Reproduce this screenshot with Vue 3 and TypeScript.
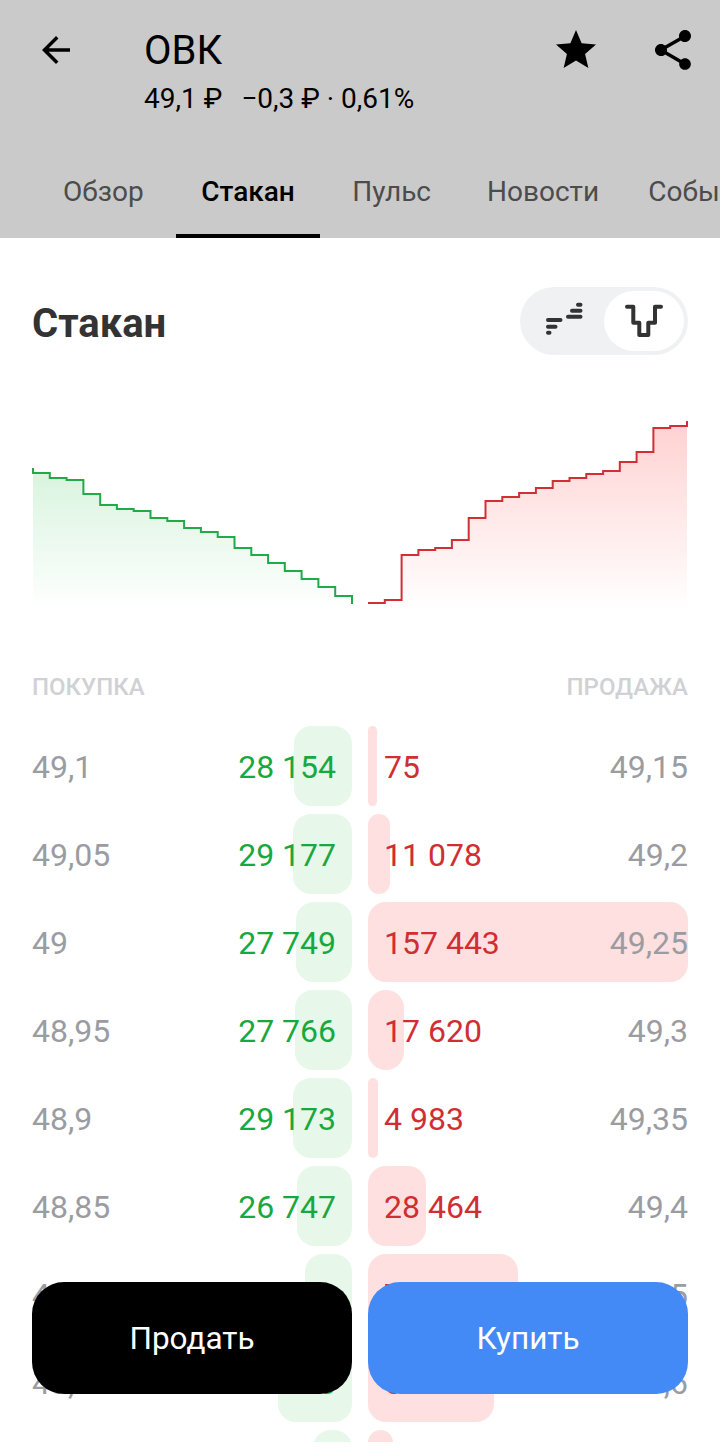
<script setup lang="ts">
interface Row { bid: string; bidQty: string; bidW: number; askQty: string; askW: number; ask: string }

const tabs = ['Обзор', 'Стакан', 'Пульс', 'Новости', 'События']

const rows: Row[] = [
  { bid: '49,1', bidQty: '28 154', bidW: 58, askQty: '75', askW: 9, ask: '49,15' },
  { bid: '49,05', bidQty: '29 177', bidW: 59, askQty: '11 078', askW: 22, ask: '49,2' },
  { bid: '49', bidQty: '27 749', bidW: 56, askQty: '157 443', askW: 320, ask: '49,25' },
  { bid: '48,95', bidQty: '27 766', bidW: 57, askQty: '17 620', askW: 36, ask: '49,3' },
  { bid: '48,9', bidQty: '29 173', bidW: 59, askQty: '4 983', askW: 10, ask: '49,35' },
  { bid: '48,85', bidQty: '26 747', bidW: 55, askQty: '28 464', askW: 58, ask: '49,4' },
  { bid: '48,8', bidQty: '23 310', bidW: 47, askQty: '75 012', askW: 150, ask: '49,5' },
  { bid: '48,75', bidQty: '36 540', bidW: 74, askQty: '63 177', askW: 126, ask: '49,6' },
  { bid: '', bidQty: '', bidW: 39, askQty: '', askW: 25, ask: '' },
]

const bidLevels = [473, 478, 480, 494, 505, 509, 511, 518, 521, 528, 532, 537, 548, 555, 563, 571, 579, 587, 596]
const askLevels = [603, 600, 555, 550, 548, 540, 518, 501, 497, 493, 488, 481, 478, 474, 471, 462, 452, 428, 426]
const top = 410
const base = 610
const step = 319 / 19

function stepped(levels: number[], x0: number): string {
  return levels
    .map((y, i) => `${i === 0 ? 'M' : 'L'}${(x0 + i * step).toFixed(1)} ${y - top}H${(x0 + (i + 1) * step).toFixed(1)}`)
    .join('')
}

const bidLine = `M33 ${468 - top}V${473 - top}` + stepped(bidLevels, 33).replace(/^M/, 'L') + `V${604 - top}`
const bidFill = stepped(bidLevels, 33) + `V${base - top}H33Z`
const askLine = stepped(askLevels, 368) + `V${421 - top}`
const askFill = stepped(askLevels, 368) + `V${base - top}H368Z`
</script>

<template>
  <div class="page">
    <header class="top">
      <div class="bar">
        <button class="icon back" aria-label="Назад">
          <svg viewBox="0 0 24 24" width="42" height="42"><path d="M20 11H7.83l5.59-5.59L12 4l-8 8 8 8 1.41-1.41L7.83 13H20z" /></svg>
        </button>
        <div class="heading">
          <div class="name">ОВК</div>
          <div class="quote"><span>49,1 ₽</span><span>−0,3 ₽ · 0,61%</span></div>
        </div>
        <button class="icon star" aria-label="Избранное">
          <svg viewBox="0 0 24 24" width="48" height="48"><path d="M12 17.27 18.18 21l-1.64-7.03L22 9.24l-7.19-.61L12 2 9.19 8.63 2 9.24l5.46 4.73L5.82 21z" /></svg>
        </button>
        <button class="icon share" aria-label="Поделиться">
          <svg viewBox="0 0 24 24" width="48" height="48"><path d="M18 16.08c-.76 0-1.44.3-1.96.77L8.91 12.7c.05-.23.09-.46.09-.7s-.04-.47-.09-.7l7.05-4.11c.54.5 1.25.81 2.04.81 1.66 0 3-1.34 3-3s-1.34-3-3-3-3 1.34-3 3c0 .24.04.47.09.7L8.04 9.81C7.5 9.31 6.79 9 6 9c-1.66 0-3 1.34-3 3s1.34 3 3 3c.79 0 1.5-.31 2.04-.81l7.12 4.16c-.05.21-.08.43-.08.65 0 1.61 1.31 2.92 2.92 2.92s2.92-1.31 2.92-2.92-1.31-2.92-2.92-2.92z" /></svg>
        </button>
      </div>
      <nav class="tabs">
        <div v-for="(t, i) in tabs" :key="t" class="tab" :class="{ on: i === 1 }">{{ t }}</div>
      </nav>
    </header>

    <section class="title-row">
      <h1>Стакан</h1>
      <div class="toggle">
        <div class="opt">
          <svg viewBox="0 0 40 40" width="40" height="40" class="ico">
            <path d="M4 19H16.500M4 25.700H11.500M4 31.700H5.500M24 15.700H36.500M28 9.700H36.500M34 3.700H36.500" />
          </svg>
        </div>
        <div class="opt active">
          <svg viewBox="0 0 40 40" width="40" height="40" class="ico">
            <path d="M3 5.700H9.300V21.700H15.300V34H24.300V21.700H31V5.700H37" />
          </svg>
        </div>
      </div>
    </section>

    <svg class="chart" viewBox="0 0 720 210" width="720" height="210">
      <defs>
        <linearGradient id="gb" x1="0" y1="0" x2="0" y2="1">
          <stop offset="0" stop-color="#d9f4df" />
          <stop offset="1" stop-color="#ffffff" />
        </linearGradient>
        <linearGradient id="ga" x1="0" y1="0" x2="0" y2="1">
          <stop offset="0" stop-color="#ffd2d2" />
          <stop offset="1" stop-color="#ffffff" />
        </linearGradient>
      </defs>
      <path :d="bidFill" fill="url(#gb)" />
      <path :d="askFill" fill="url(#ga)" />
      <path :d="bidLine" fill="none" stroke="#22a94a" stroke-width="2" />
      <path :d="askLine" fill="none" stroke="#d02f35" stroke-width="2" />
    </svg>

    <div class="labels"><span>ПОКУПКА</span><span>ПРОДАЖА</span></div>

    <div class="book">
      <div v-for="(r, i) in rows" :key="i" class="row">
        <div class="side bid">
          <i class="fill" :style="{ width: r.bidW + 'px' }"></i>
          <span class="price">{{ r.bid }}</span>
          <span class="qty">{{ r.bidQty }}</span>
        </div>
        <div class="side ask">
          <i class="fill" :style="{ width: r.askW + 'px' }"></i>
          <span class="qty">{{ r.askQty }}</span>
          <span class="price">{{ r.ask }}</span>
        </div>
      </div>
    </div>

    <div class="actions">
      <button class="act sell">Продать</button>
      <button class="act buy">Купить</button>
    </div>
  </div>
</template>

<style scoped>
.page {
  position: relative;
  width: 720px;
  height: 1452px;
  overflow: hidden;
  background: #fff;
  font-family: Roboto, "Noto Sans", sans-serif;
  color: #000;
}
.top {
  height: 238px;
  background: #cacaca;
  overflow: hidden;
}
.bar {
  display: flex;
  align-items: flex-start;
  height: 150px;
  padding: 27px 23px 0 35px;
  box-sizing: border-box;
}
.icon {
  border: 0;
  padding: 0;
  background: none;
  display: flex;
  line-height: 0;
}
.icon svg { fill: #000; }
.back { margin-top: 2px; }
.star { margin-left: auto; margin-top: -1px; }
.share { margin-left: 49px; margin-top: -1px; }
.heading {
  margin-left: 67px;
}
.name {
  font-size: 40px;
  line-height: 48px;
}
.quote {
  display: flex;
  gap: 19px;
  margin-top: 6px;
  font-size: 28px;
  line-height: 36px;
}
.tabs {
  display: flex;
  height: 88px;
  white-space: nowrap;
}
.tab {
  height: 88px;
  box-sizing: border-box;
  font-size: 28px;
  line-height: 84px;
  color: #4c4c4c;
  flex: none;
}
.tab:nth-child(1) { padding: 0 32px 0 63px; }
.tab:nth-child(2) { padding: 0 25.5px; }
.tab:nth-child(3) { padding: 0 28px 0 32px; }
.tab:nth-child(4) { padding: 0 25px 0 28px; }
.tab:nth-child(5) { padding: 0 24px; }
.tab.on {
  color: #000;
  font-weight: 500;
  border-bottom: 4px solid #000;
}
.title-row {
  display: flex;
  align-items: center;
  justify-content: space-between;
  padding: 49px 32px 0;
  height: 68px;
}
h1 {
  margin: 4px 0 0;
  font-size: 40px;
  font-weight: 700;
  color: #333;
}
.toggle {
  display: flex;
  align-items: center;
  width: 168px;
  height: 68px;
  padding: 4px;
  box-sizing: border-box;
  border-radius: 34px;
  background: #f0f1f3;
}
.opt {
  width: 80px;
  height: 60px;
  border-radius: 30px;
  display: flex;
  align-items: center;
  justify-content: center;
}
.opt.active {
  background: #fff;
}
.ico {
  fill: none;
  stroke: #333;
  stroke-width: 4;
  stroke-linecap: round;
  stroke-linejoin: round;
}
.chart {
  display: block;
  margin-top: 55px;
}
.labels {
  display: flex;
  justify-content: space-between;
  padding: 0 32px;
  margin-top: 51px;
  font-size: 24px;
  line-height: 32px;
  font-weight: 500;
  color: #d0d1d4;
}
.book {
  margin-top: 23px;
  height: 716px;
  overflow: hidden;
  padding: 0 32px;
  display: flex;
  flex-direction: column;
  gap: 8px;
}
.row {
  display: grid;
  grid-template-columns: 320px 320px;
  gap: 16px;
  flex: none;
  height: 80px;
}
.side {
  position: relative;
  display: flex;
  align-items: center;
  justify-content: space-between;
  padding-top: 2px;
  box-sizing: border-box;
  font-size: 32px;
}
.fill {
  position: absolute;
  top: 0;
  bottom: 0;
  border-radius: 18px;
}
.bid .fill { right: 0; background: #e7f7ea; }
.ask .fill { left: 0; background: #ffe0e0; }
.price {
  position: relative;
  color: #9a9ca1;
}
.qty { position: relative; }
.bid .qty { color: #18a83f; margin-right: 16px; }
.ask .qty { color: #cf2e33; margin-left: 16px; }
.actions {
  position: absolute;
  left: 32px;
  right: 32px;
  top: 1282px;
  display: grid;
  grid-template-columns: 320px 320px;
  gap: 16px;
}
.act {
  height: 112px;
  border: 0;
  border-radius: 32px;
  color: #fff;
  font-family: inherit;
  font-size: 31.5px;
}
.sell { background: #000; }
.buy { background: #438af7; }
</style>
